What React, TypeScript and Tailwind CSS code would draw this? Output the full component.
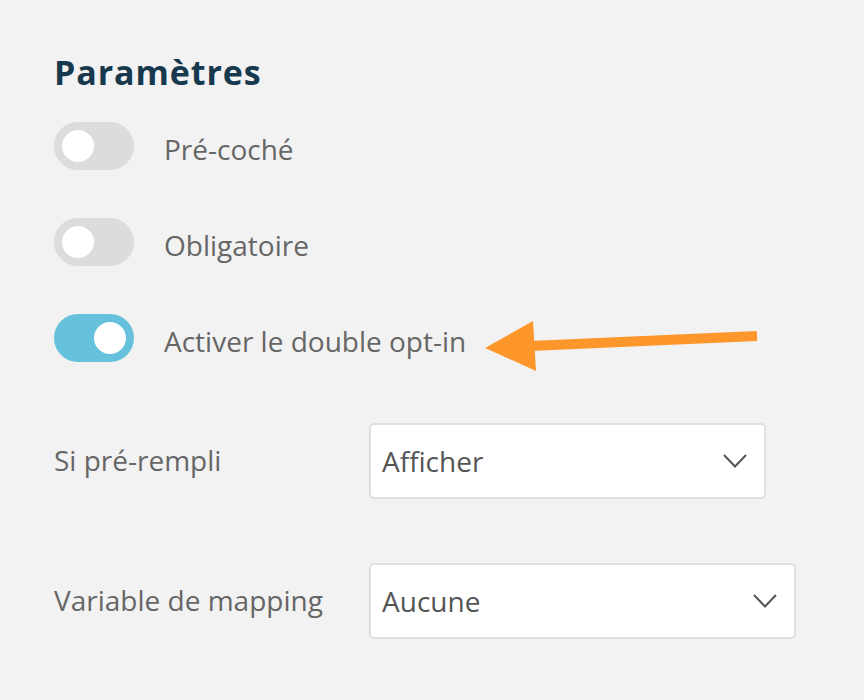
import React from "react";

const Toggle = ({ on, label }: { on?: boolean; label: string }) => (
  <div className="flex items-center h-12">
    <div
      className={
        "w-20 h-12 rounded-full flex items-center px-2 shrink-0 " +
        (on ? "bg-[#66c2dc] justify-end" : "bg-[#dcdcdc] justify-start")
      }
    >
      <div className="w-8 h-8 rounded-full bg-white" />
    </div>
    <span className="ml-[30px] text-[28px] text-[#666666] leading-[38px] mt-[6px]">{label}</span>
  </div>
);

const Select = ({ value, width }: { value: string; width: string }) => (
  <div
    className={
      "h-[76px] bg-white border-2 border-[#e0e0e0] rounded-[5px] flex items-center justify-between pl-[11px] pr-[17px] " +
      width
    }
  >
    <span className="text-[28px] text-[#555555] leading-[38px]">{value}</span>
    <svg width="24" height="14" viewBox="0 0 24 14" fill="none">
      <polyline points="1,1 12,12.5 23,1" stroke="#555" strokeWidth="2" />
    </svg>
  </div>
);

export default function App() {
  return (
    <div
      className="relative min-h-[700px] bg-[#f2f2f2] pl-[54px] pt-[49px]"
      style={{ fontFamily: '"Open Sans", sans-serif' }}
    >
      <h2 className="text-[34px] font-bold text-[#17394d] leading-[46px] tracking-[0.9px]">
        Paramètres
      </h2>

      <div className="flex flex-col gap-12 mt-[27px]">
        <Toggle label="Pré-coché" />
        <Toggle label="Obligatoire" />
        <Toggle on label="Activer le double opt-in" />
      </div>

      <div className="flex flex-col gap-16 mt-[61px]">
        <div className="flex items-center">
          <span className="w-[315px] text-[28px] text-[#666666] leading-[38px] -mt-[3px]">Si pré-rempli</span>
          <Select value="Afficher" width="w-[397px]" />
        </div>
        <div className="flex items-center">
          <span className="w-[315px] text-[28px] text-[#666666] leading-[38px] -mt-[3px]">Variable de mapping</span>
          <Select value="Aucune" width="w-[427px]" />
        </div>
      </div>

      <svg
        className="absolute left-0 top-0 pointer-events-none"
        width="864"
        height="700"
        viewBox="0 0 864 700"
      >
        <line x1="757" y1="336" x2="530" y2="346" stroke="#fd962b" strokeWidth="10" />
        <polygon points="485,348 533,321 536,371" fill="#fd962b" />
      </svg>
    </div>
  );
}
